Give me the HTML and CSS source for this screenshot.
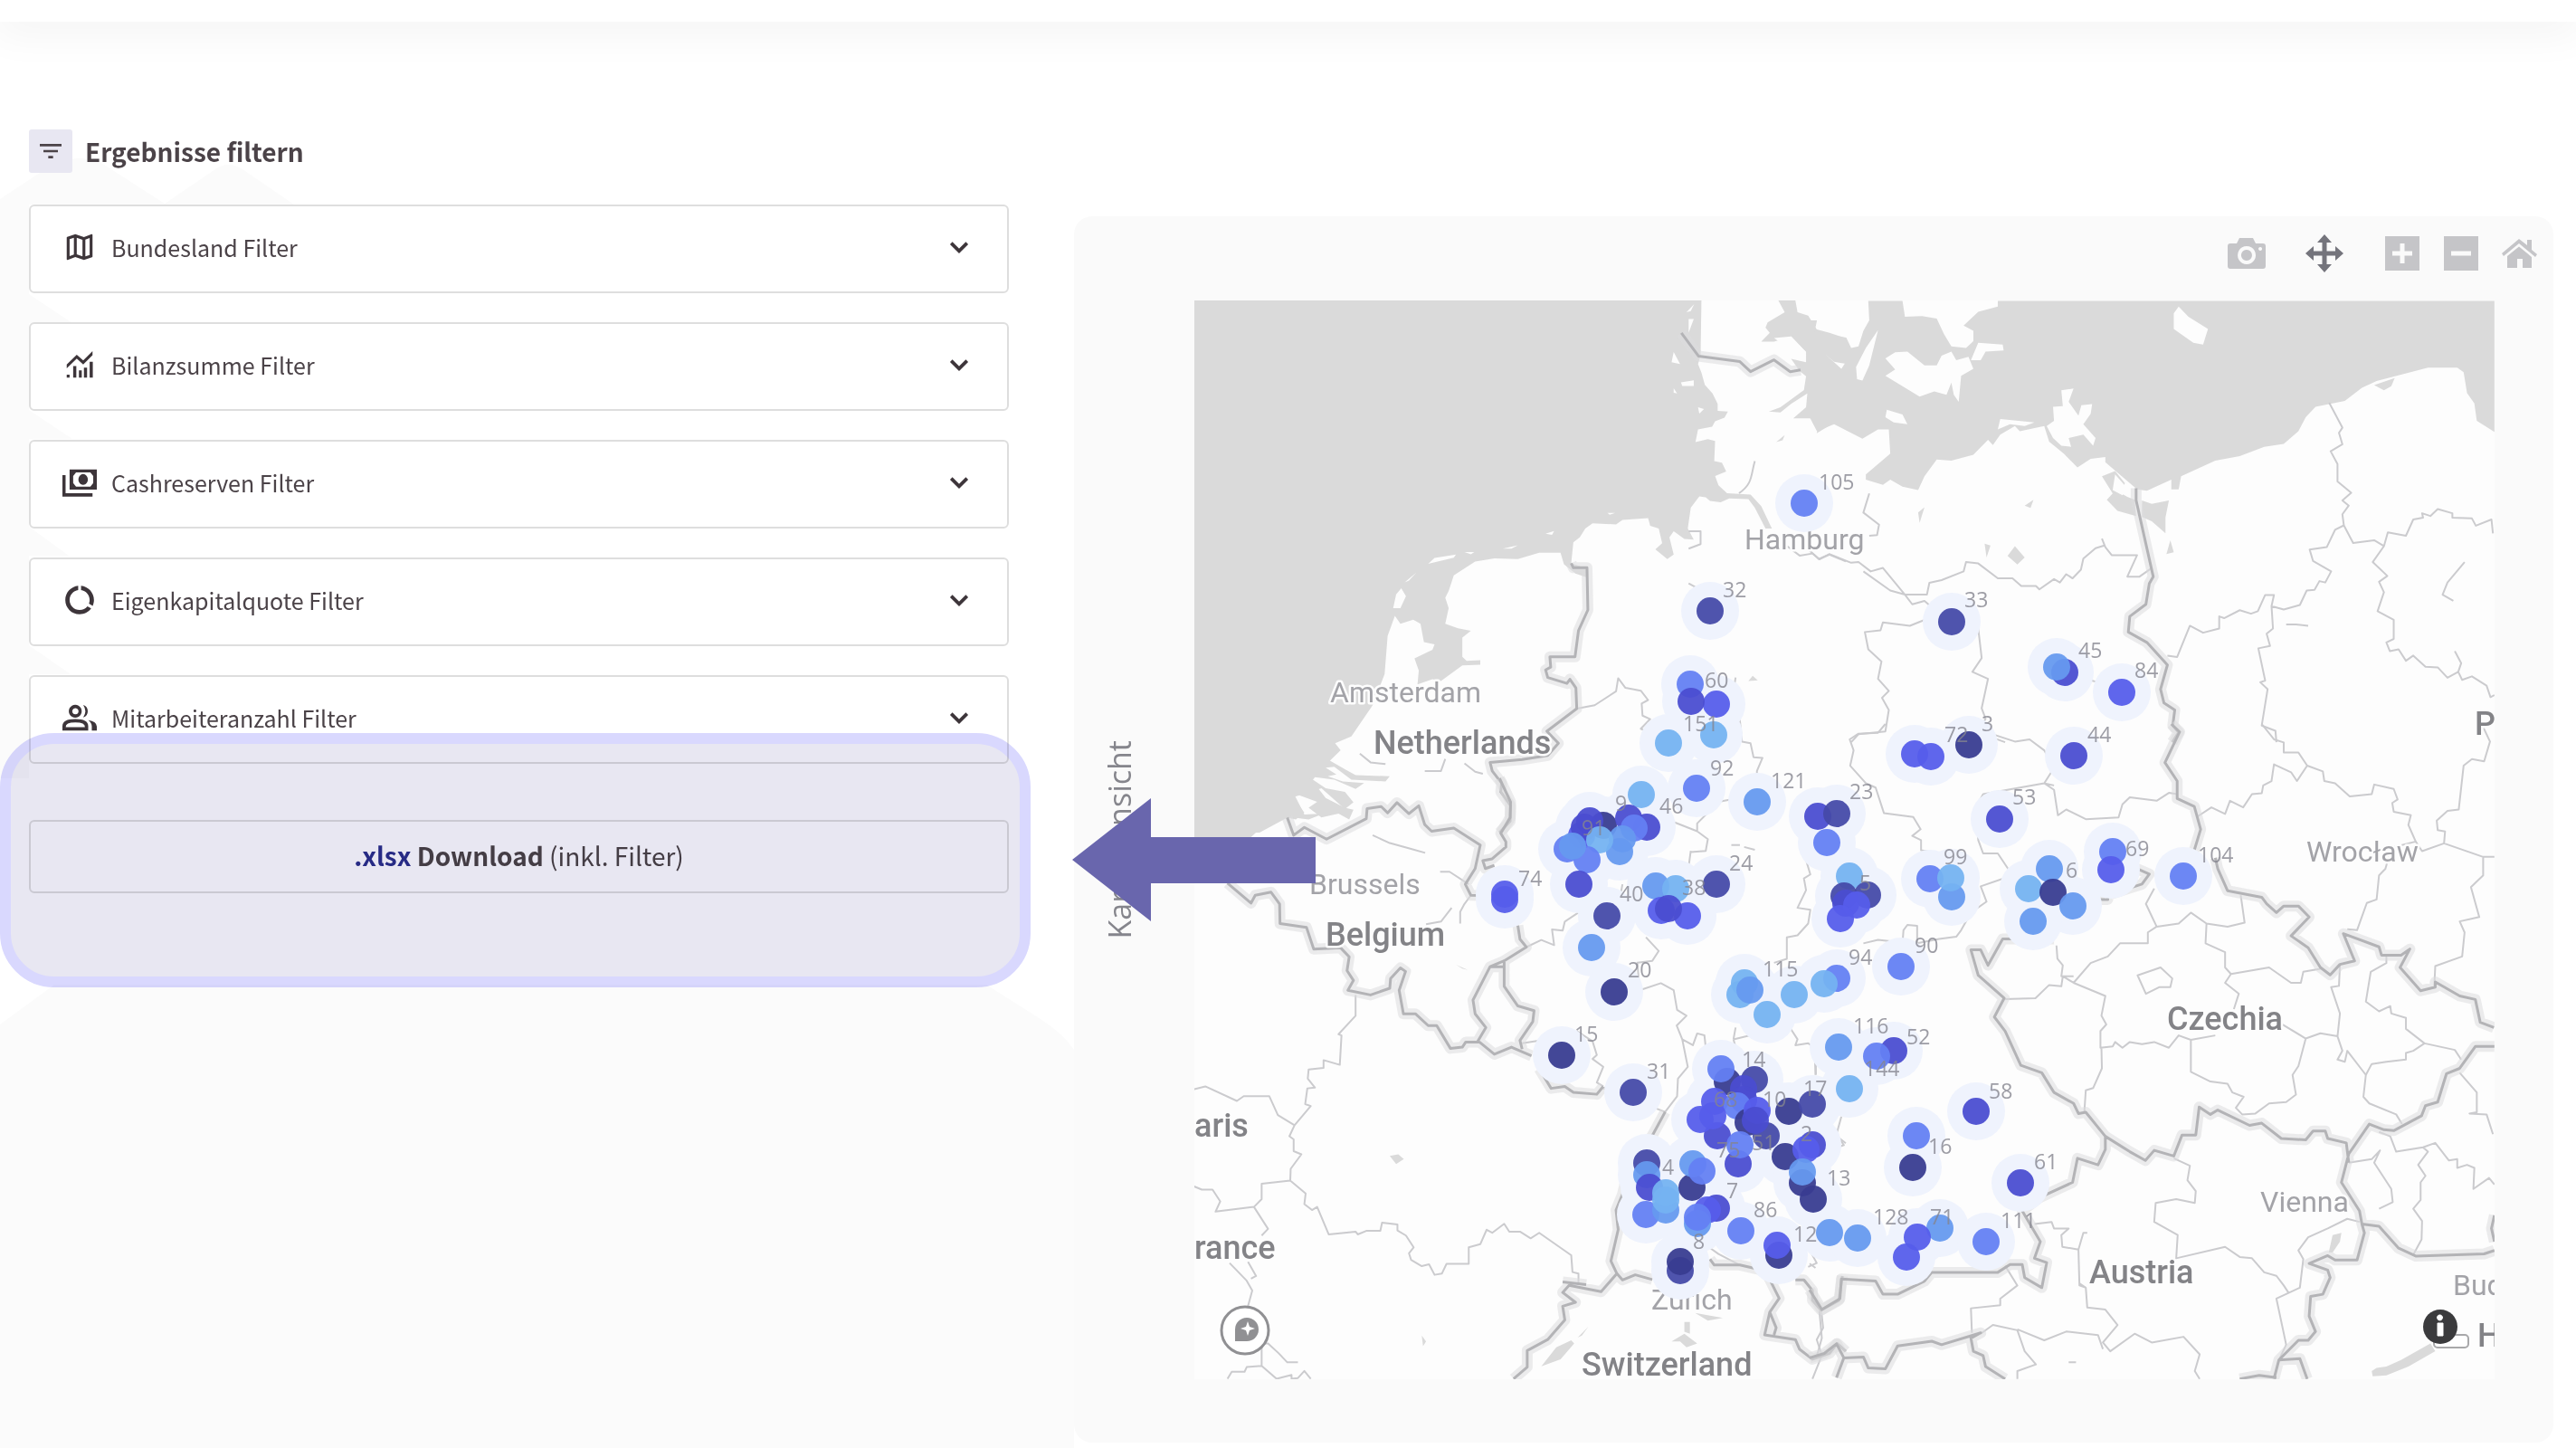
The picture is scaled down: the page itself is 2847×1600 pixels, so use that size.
FILE: index.html
```
<!DOCTYPE html>
<html lang="de">
<head>
<meta charset="utf-8">
<title>Ergebnisse filtern</title>
<link rel="stylesheet" href="styles.css">
</head>
<body>
<svg class="backdrop" width="1187" height="1600" viewBox="0 0 1187 1600" aria-hidden="true">
  <path d="M0 220 50 187Q80 167 112 180L182 225 238 187Q252 177 268 187L325 226H32V325L80 357H32V453L80 485H32V582L76 614H32V713L78 745H32V860H0ZM0 1132 60 1088H1090L1150 1126Q1175 1142 1187 1160V1600H0Z"/>
</svg>
<header class="topbar"></header>
<main class="layout">
  <section class="filters">
    <h1 class="heading">
      <span class="heading-icon"><svg width="32" height="32" viewBox="0 0 24 24"><path d="M10 18h4v-2h-4v2zM3 6v2h18V6H3zm3 7h12v-2H6v2z"/></svg></span>
      Ergebnisse filtern
    </h1>
    <div class="filter-list">
      <button class="filter" type="button">
        <svg class="icon" viewBox="0 0 24 24"><path d="M20.5 3l-.16.03L15 5.1 9 3 3.36 4.9c-.21.07-.36.25-.36.48V20.5c0 .28.22.5.5.5l.16-.03L9 18.900l6 2.1 5.640-1.9c.21-.07.36-.25.36-.48V3.5c0-.28-.22-.5-.5-.5zM10 5.470l4 1.4v11.660l-4-1.4V5.470zm-5 .99l3-1.010v11.700l-3 1.160V6.460zm14 11.080l-3 1.010V6.860l3-1.160v11.840z"/></svg>
        <span class="label">Bundesland Filter</span>
        <svg class="chevron" viewBox="0 0 24 24"><path d="M5 8.500 12 15.500 19 8.500"/></svg>
      </button>
      <button class="filter" type="button">
        <svg class="icon" viewBox="0 0 24 24"><path d="M3 19h2v2H3zM7.500 13h2.200v8H7.500zM11.500 16h2v5h-2zM15 14h2.200v7H15zM19 10h2.200v11H19zM3 14.500V11.800L10 5l4.500 4L21 2.500v2.800L14.500 11.800 10 7.700z"/></svg>
        <span class="label">Bilanzsumme Filter</span>
        <svg class="chevron" viewBox="0 0 24 24"><path d="M5 8.500 12 15.500 19 8.500"/></svg>
      </button>
      <button class="filter" type="button">
        <svg class="icon" viewBox="0 0 24 24"><path fill-rule="evenodd" d="M5 3h19v14H5zM7.500 7.500v5L9.500 15h10l2-2.500v-5L19.500 5h-10zM14.500 6.200a3.300 3.800 0 1 1-.1 0zM0 7h2.200v12.500H21V22H0z"/></svg>
        <span class="label">Cashreserven Filter</span>
        <svg class="chevron" viewBox="0 0 24 24"><path d="M5 8.500 12 15.500 19 8.500"/></svg>
      </button>
      <button class="filter" type="button">
        <svg class="icon" viewBox="0 0 24 24"><path d="M13 2.050v3.030c3.390.49 6 3.390 6 6.920 0 .9-.18 1.750-.48 2.540l2.600 1.530c.56-1.240.88-2.620.88-4.070 0-5.180-3.950-9.450-9-9.950zM12 19c-3.870 0-7-3.130-7-7 0-3.530 2.610-6.430 6-6.920V2.050c-5.060.5-9 4.760-9 9.950 0 5.520 4.470 10 9.990 10 3.310 0 6.240-1.610 8.060-4.090l-2.600-1.530C16.170 17.980 14.210 19 12 19z"/></svg>
        <span class="label">Eigenkapitalquote Filter</span>
        <svg class="chevron" viewBox="0 0 24 24"><path d="M5 8.500 12 15.500 19 8.500"/></svg>
      </button>
      <button class="filter" type="button">
        <svg class="icon" viewBox="0 0 24 24"><path fill-rule="evenodd" d="M9 3a4.500 4.500 0 1 1-.1 0zM9 5.300a2.200 2.200 0 1 0 .1 0zM0 21v-3q0-5 9-5t9 5v3zM2.300 18.700h13.400Q16 15.300 9 15.300T2.300 18.700zM14.500 3.200a4.500 4.500 0 0 1 0 8.600q3-4.300 0-8.600zM18 13.700q6 1 6 4.500V21h-3.500v-3q0-2.500-2.500-4.300z"/></svg>
        <span class="label">Mitarbeiteranzahl Filter</span>
        <svg class="chevron" viewBox="0 0 24 24"><path d="M5 8.500 12 15.500 19 8.500"/></svg>
      </button>
    </div>
    <button class="download" type="button"><b><span class="ext">.xlsx</span> Download</b> (inkl. Filter)</button>
    <div class="highlight"></div>
  </section>
  <section class="panel">
    <div class="toolbar">
      <button class="tool" type="button" aria-label="Bild speichern"><svg viewBox="0 0 42 42"><path fill-rule="evenodd" d="M3 10H10L13 4H28L31 10H39Q42 10 42 13V35Q42 38 39 38H3Q0 38 0 35V13Q0 10 3 10ZM21 13a10 10 0 1 0 .1 0zM21 17a6 6 0 1 1-.1 0zM36 14a2 2 0 1 0 .1 0z"/></svg></button>
      <button class="tool active" type="button" aria-label="Verschieben"><svg viewBox="0 0 42 42"><path d="M21 0 29 9H23.500V18.500H33V13L42 21 33 29V23.500H23.500V33H29L21 42 13 33H18.500V23.500H9V29L0 21 9 13V18.500H18.500V9H13Z"/></svg></button>
      <div class="tool-group">
        <button class="tool" type="button" aria-label="Vergrößern"><svg viewBox="0 0 42 42"><path fill-rule="evenodd" d="M2 2H40V40H2ZM18.500 10V18.500H10V23.500H18.500V32H23.500V23.500H32V18.500H23.500V10Z"/></svg></button>
        <button class="tool" type="button" aria-label="Verkleinern"><svg viewBox="0 0 42 42"><path fill-rule="evenodd" d="M2 2H40V40H2ZM10 18.500V23.500H32V18.500Z"/></svg></button>
        <button class="tool" type="button" aria-label="Zurücksetzen"><svg viewBox="0 0 42 42"><path d="M1 21 20 5 29 12V6H34V17L40 22 38 25 20 10 3 24ZM7 24 20 13.500 34 25V37H24V27H18V37H7Z"/></svg></button>
      </div>
    </div>
    <div class="map-row">
      <span class="side-label">Kartenansicht</span>
      <svg class="map" viewBox="1320 332 1437 1192">
        <rect class="land" x="1320" y="332" width="1437" height="1192"/>
        <!-- north-west -->
        <g transform="translate(1300 320) scale(.4719 .3827)">
          <path class="water" d="M42 31H1230L1228 190 1222 215 1230 240 1238 275 1256 300 1268 330V350L1292 352 1284 370 1262 380 1255 396 1222 404 1216 440 1245 432 1262 437 1260 495 1278 500 1288 525 1262 538 1270 565 1290 588 1345 592 1370 625 1395 690 1380 690 1355 630 1340 605 1295 603 1275 614 1250 610 1240 600 1225 597 1205 630 1198 690 1212 722 1190 720 1165 698 1155 715 1165 765 1150 778 1122 750 1138 732 1130 690 1110 682 1105 660 1045 665 1030 678 975 675 958 690 945 715 930 730 925 790 960 805V830L935 820 908 793 900 760 850 760 800 778 745 776 700 785 650 825 638 870 630 890 638 920 630 965 660 978 690 985 670 1005V1060L680 1072 712 1070V1083L670 1085 620 1130 600 1125 565 1140 568 1100 558 1065 600 1040 605 1024 580 1018 572 965 555 953 525 965 512 942 495 1000 488 1110 460 1200 410 1290 372 1310 385 1330 360 1360 395 1385 420 1402 500 1405 490 1420 410 1415 370 1378 350 1380 375 1400 355 1405 390 1420 440 1425 420 1442 370 1415 325 1408 320 1415 350 1440 395 1450 415 1480 395 1500 340 1440 275 1465 300 1510 280 1530 260 1525 195 1568H42ZM1410 31H1450L1455 65 1480 75 1500 115 1530 125 1568 140V400L1540 385 1500 415 1507 372 1445 372 1475 340 1478 300 1440 330 1415 355 1388 352 1415 340 1470 290 1475 250 1460 235 1440 200 1475 210 1475 180 1440 135 1400 150 1370 150 1390 125 1380 110 1385 95 1425 65ZM1340 1130 1350 1115 1362 1128ZM1405 440 1425 420 1420 435Z"/>
          <path class="land" d="M1195 65 1213 42 1205 62ZM1200 85H1212L1200 125ZM1165 180 1180 215 1160 210ZM1182 268 1212 262V278H1185ZM1165 285 1173 300 1165 298ZM1222 340 1236 345 1225 358ZM1520 185 1568 210 1552 225 1535 215ZM1475 180 1462 205 1435 195 1440 175 1400 140 1440 135ZM590 792 605 775 655 765 650 774ZM675 758 698 758 690 764ZM765 748 800 738 785 748ZM865 705 885 697 880 708ZM828 725 830 720ZM1010 645 1028 645 1015 650ZM535 845 562 817 545 840ZM508 920 515 880 527 862 538 885 525 920Z"/>
          <g class="region"><path d="M938 1210 980 1200 1030 1160 1035 1122 1052 1150 1088 1158 1105 1185 1090 1195 1092 1230 1110 1240 1088 1268 1110 1280 1155 1250M1310 1120 1305 1160 1290 1200 1318 1220 1325 1305 1345 1310 1352 1350 1373 1352 1360 1390 1360 1430 1400 1432M1200 848 1240 875 1270 870M1355 495C1345 540 1350 560 1318 588M1200 698H1228V735L1200 748M1430 740 1460 768 1490 762 1505 778 1530 765 1568 785M430 1340 455 1365 490 1370M630 1355 620 1390H582M675 1368 700 1392 718 1398"/></g>
          <g class="border"><path id="nw" d="M1183 125 1223 192 1320 208 1345 237 1400 203 1438 237 1462 232M925 790 930 803H962L964 925 942 985 934 1060H875L877 1090 865 1098 870 1120 915 1137 922 1125 936 1150 938 1210 868 1275 895 1310 870 1345 810 1357 735 1365 740 1390 762 1425 760 1450 783 1490 782 1535 757 1568"/></g>
          <use class="border-line" href="#nw"/>
        </g>
        <!-- north-east -->
        <g transform="translate(2000 220) scale(.5402 .3827)">
          <path class="water" d="M0 350 15 350 10 385 75 400 85 430 100 425 110 380 122 350 120 294H190L195 340 230 338 260 345 275 390 290 425 320 430 335 410V380L315 365 345 325 385 310V294H1401V672L1365 640 1360 590 1345 560 1338 500 1325 487H1265L1160 525 1130 545 1095 583 1035 600 1015 630 1000 670 970 707 930 715 880 742 830 755 760 800 755 838H740V810L690 842 670 838 605 760V745L575 750 548 775 520 735 490 700 480 655 430 670 420 655 390 680 375 710 365 695 335 738 290 755 260 752 235 800 222 840 190 830 165 810 150 825 115 810V795L165 735 162 665 140 665 108 692 50 650 15 670 0 630ZM598 800 625 785 645 820 638 850 650 860 665 868 668 915 630 900 608 868 620 850ZM680 870 700 880 735 870 728 920V965L700 930 680 918ZM1155 537 1197 517 1190 540 1175 552ZM222 905 235 890 225 935ZM440 885 458 868 452 892ZM358 995 370 1000 362 1035ZM405 1030 420 1002 440 1035 425 1055ZM730 1025 738 985 745 1020ZM1383 1200 1401 1225Z"/>
          <path class="land" d="M155 460 175 442 200 440 235 480 260 480 270 452 290 440 300 465 325 455 335 490 310 510 305 585 295 565 290 530 280 565 255 555 225 570 155 510 175 492ZM330 465 345 415 395 420 397 437 360 440 350 465ZM140 378 122 480 108 524 97 520 95 485 115 430ZM32 448 50 470 72 475 65 490ZM158 608 190 622 200 650 172 645 155 630ZM515 552 540 547 530 585 550 625 556 595 578 592 575 620 560 650 585 690 580 712 560 680 530 690 535 715 515 712 498 690 485 655 500 640 498 600 518 598ZM755 310 775 340 815 375 805 420 785 415 745 375V330ZM625 795 650 835 640 855 620 840ZM390 635 460 645 440 655 410 650 385 665Z"/>
          <g class="region"><path d="M1063 588 1090 660 1083 675 1090 708 1066 728 1080 765V815L1108 848 1090 870 1103 885 1090 910 1093 942 1112 993 1155 985 1175 1002 1152 1048 1182 1088 1165 1105 1175 1135 1162 1190 1195 1215V1270L1180 1280 1187 1305 1205 1300 1220 1333 1235 1318 1260 1350 1285 1352 1305 1382 1327 1365 1335 1388 1355 1378 1385 1405 1393 1438 1401 1432M1093 942 1075 955 1058 1005 1023 1012 1030 1045 1067 1075 1055 1107 1043 1103 1033 1128 1017 1130 1003 1172 970 1185 945 1175 950 1143H932L917 1190 903 1197 880 1187 848 1210 838 1205V1240L805 1252 778 1232 752 1322 732 1318M945 1175 948 1240 935 1255 942 1290 918 1297 932 1390 922 1395 937 1415 925 1520 953 1535 955 1568M1175 1002 1183 962 1220 972 1235 925 1255 920 1253 907 1270 915 1285 895 1315 907V920L1355 922 1363 943 1395 925 1398 965M598 980 605 1005 618 1028H670L650 1090H675L700 1065M603 1000 585 1008 560 1038 555 1070 538 1095 525 1083 512 1107 500 1097 470 1127 463 1117H433L415 1095H385L345 1052 320 1048 315 1075 270 1100 245 1108 240 1142H195L150 1065 125 1075 100 1048 85 1050 40 1025 20 1040 0 1015M110 1075 165 1130 195 1142 210 1170 235 1160 280 1215 345 1240 352 1325 333 1365 365 1385 352 1470 360 1500 345 1540 400 1568M235 1215 205 1232 150 1222 145 1245 113 1250 120 1300 147 1335 140 1385 162 1420 148 1440 162 1475 155 1537 100 1545 85 1568M122 850 110 905 142 940 138 970 122 972M1340 1048 1305 1107 1295 1142 1317 1160M1320 1305 1333 1340 1327 1365M975 1228H995L1020 1232M570 1350 577 1390 590 1395"/></g>
          <g class="border"><path id="ne" d="M668 835V870L703 1090 695 1110 688 1170 655 1205 652 1250 690 1280 732 1345 718 1415 725 1455 747 1475 743 1520 755 1540 742 1568"/></g>
          <use class="border-line" href="#ne"/>
        </g>
        <!-- south-west -->
        <g transform="translate(1300 860) scale(.4719 .4337)">
          <path class="water" d="M42 0H310L325 15 350 50 395 75 415 80 405 105 380 90 340 100 310 75 330 60 275 38 300 92 345 90 310 105 260 98 240 105 215 110 175 150 42 210ZM500 962 520 958 533 970 515 983ZM855 1498 890 1450 925 1432 932 1440 900 1480ZM940 1425 965 1397 950 1420ZM1190 1385H1203V1415L1190 1410ZM1160 1435 1190 1415 1220 1440 1195 1450 1180 1435ZM1215 1362 1280 1375 1245 1382ZM655 475 683 488 670 485ZM575 1420 585 1435 578 1447Z"/>
          <g class="region"><path d="M42 792 68 785 142 822 158 810 218 810 238 858 277 884 265 912 275 920V950L293 958 268 995 267 1025 200 1033V1072L182 1092 92 1104 103 1078 85 1048H60L42 1040M277 884 315 835 302 830 307 790 325 788 308 765 310 742 345 738V718L383 730 387 655 380 652 420 605V552M267 1025 303 1058 300 1085 318 1100 330 1092 357 1162 420 1155 425 1162 445 1153H478L482 1132 518 1137V1152L538 1165 556 1195 545 1210 550 1227 575 1243 592 1238 605 1265 622 1262 633 1237H685V1195L712 1187 727 1150 740 1158 768 1135 780 1155H805L830 1172 850 1158 925 1215 928 1258 942 1262V1290M182 1092 215 1148 200 1165M125 1235 165 1280 178 1305 168 1345M168 1232 187 1268 175 1275M200 1440 215 1440 240 1465 260 1488H285M200 1440V1497L165 1500 160 1512H130L120 1530M200 1497 235 1530 270 1520V1530L285 1528 300 1510 315 1530M820 430 855 412 885 425 880 385 905 388 910 365 945 340 1040 300 1045 270M1100 405 1130 440 1115 465 1080 470 1085 540 1135 522 1165 540 1173 590 1195 605 1172 630 1185 665 1210 680 1220 650 1237 655 1240 685H1310L1305 665M1185 665 1198 735 1175 765 1173 810 1145 850 1000 790 1010 785M810 675 900 660 940 645 975 670 985 705 975 715 1000 735 985 775 1000 785M1305 665 1420 635 1440 640 1455 665 1450 680 1480 675 1498 690V755M1310 635 1305 665M1150 105 1220 135 1220 115 1270 60 1295 55 1305 80 1390 90M1205 185 1200 225 1190 250M1220 135 1245 155 1240 185 1205 188M1300 170H1320M1330 175 1355 182M1568 190 1470 190 1485 245 1470 255 1475 285 1455 330 1485 335 1480 370 1455 400 1430 405V460L1400 470M1248 1195 1270 1212 1320 1240M1500 1170 1480 1195 1500 1235 1480 1245M460 145 500 165 550 180 583 190M618 238H640L685 270M690 298 675 320 665 340 665 370M645 330 620 365 585 372M1510 1350 1515 1400 1500 1430 1512 1470 1490 1530M1520 850 1545 910 1568 930"/></g>
          <g class="border"><path id="sw" d="M757 0 783 60 782 100 760 140 772 162V175L740 205 718 210 724 230 745 222M260 100 275 145 300 125 352 155 445 103 447 77 480 72 495 88 517 62 545 90 568 70 582 118 598 135 650 127 712 170 700 230 677 270 690 298 770 300M800 375 805 410 820 430 768 465 735 480 695 565 700 600 725 635 705 672M735 480H768M768 465V530L800 580 838 592 835 620 805 668 810 690M120 267 175 318 185 298 222 290 242 320 243 370 305 380 322 435 385 432 405 455 400 490 415 515 402 540 455 552 500 535 502 510 525 483 537 492 522 540 532 600H560L590 630H610L642 688 670 685 678 672H710L745 703 785 685 832 707M850 740 878 790 910 785 930 800 985 805 1000 785M1145 850 1115 910 1060 990 1045 1060 1030 1100 1035 1150 1018 1230 1032 1262 1045 1278 1075 1265 1115 1277M1250 1225 1260 1240 1320 1240 1380 1255 1412 1325 1390 1360 1378 1418 1450 1430 1460 1455 1490 1480 1530 1465 1548 1440 1568 1460M1032 1262 995 1308 920 1292 905 1310 935 1335 905 1345 910 1380 870 1430 822 1458V1500L790 1530M1390 1360 1405 1400 1400 1418M1450 1278H1470L1490 1305V1330L1510 1355 1552 1330 1560 1268M960 1290 905 1283"/></g>
          <use class="border-line" href="#sw"/>
        </g>
        <!-- south-east -->
        <g transform="translate(2000 800) scale(.5402 .4847)">
          <path class="water" d="M1150 1475 1160 1468 1180 1465 1210 1450 1270 1412 1280 1430 1225 1465 1180 1485 1152 1487ZM1062 1205 1070 1165 1088 1160 1085 1180 1070 1205Z"/>
          <g class="region"><path d="M155 0 140 20 100 22 82 35 90 60 83 95 115 135 135 145 152 203 212 212 227 240 210 255 228 265V288L270 295M310 0 420 40 450 35 480 60 500 100 480 135 355 160 340 190 345 265 355 295H385L415 345 350 370 362 405 330 430 310 470 300 485 265 490 220 500V460L200 458 192 470 190 500 165 495 140 492 110 500M500 140 480 135M480 135 500 150 508 208 525 195 565 217 632 213 640 183 655 167 710 175 735 157 752 160M795 210 822 190 850 205 860 175 887 190 905 160 925 158 928 140 945 130 950 92 985 110 997 130 1018 95 1000 65H970V42L950 35 925 0M1018 95 1050 108 1053 130 1075 135 1105 165 1150 160 1155 138 1195 148 1203 172 1192 180 1195 200 1230 208 1225 230 1240 268 1253 290 1298 272 1378 303H1401M1240 268 1190 282 1178 330 1165 345 1160 400 1140 408 1120 470 1100 468M1298 272 1300 245 1285 242 1283 220 1305 198 1328 195 1338 95 1355 80 1380 85 1392 40 1375 0M1378 303V345L1353 372 1370 440 1330 450 1340 475 1335 530 1280 552 1278 600M705 375 688 410 710 462 692 475V500H635L610 530 575 545 540 590 518 575 515 598 490 595 462 625 400 627M505 505 507 535 518 550 515 575H540M710 462 755 455 780 430 812 455 855 462 890 453 882 390M812 455 810 500 850 520V555L862 570 850 590 878 615 868 650M862 570 940 555 985 590 1005 590 1010 565 1045 558M540 590 605 620 597 665 607 685 595 700V738L620 735 625 725 640 738 655 725 680 730 705 725 735 738 755 710 780 720V793L820 815 855 820 865 840 888 850 872 875 885 890 912 888 940 865 975 862 995 845 988 800 1000 780 1015 717 960 680M597 738 598 785 580 830 565 835 562 885M780 720 830 710M1015 717 1045 705 1080 712 1085 660 1067 600 1083 597 1085 548M1080 712 1090 745 1080 765 1095 770 1100 745 1138 800 1133 850 1145 865 1200 890 1212 912M1138 800 1150 775 1180 770 1220 765V750L1235 745 1258 728 1220 695V670L1190 660 1188 643 1165 655 1138 633 1148 565 1180 545V530M1258 728 1320 743 1333 765M1330 795 1365 840V885L1350 888 1385 890 1398 935M671 573 718 555 742 580 738 600H715L688 615ZM745 990 778 1007 773 1040 790 1065 788 1092 750 1083 708 1092 705 1135 753 1165 750 1218 850 1192 880 1215 905 1218 930 1250 955 1258 970 1280 980 1297 955 1310 975 1415 960 1450M980 1297 1003 1285 1010 1220 1000 1200 1020 1170 1060 1150 1100 1128 1125 1135M1103 1000 1150 992 1167 972 1155 1000 1190 1060 1193 1090 1165 1105M1165 930 1188 940 1200 975 1255 965 1265 975 1245 1005 1260 1030 1250 1045V1085L1235 1105 1253 1133 1252 1175 1235 1210M1255 965 1280 955 1308 995 1325 992V1012L1345 1005 1360 1012 1358 1060 1390 1035 1401 1050M400 1235 425 1280 390 1310V1325L330 1332 332 1388M460 1140 495 1135 500 1150 530 1150 515 1165 517 1192 550 1198 560 1160H568M550 1198 552 1280 565 1285 568 1330 605 1335 630 1370 600 1410 615 1430 665 1390 700 1410 765 1397 798 1437 788 1475 798 1493M565 1285 552 1275M350 1390 375 1370 425 1382 440 1430 463 1460 425 1475V1493M425 1380 480 1405 525 1385 590 1393 600 1425M0 730 10 735 12 800M65 895 55 935 70 960 45 970M0 1230 12 1240M20 1338 25 1400 15 1440M530 1455H545"/></g>
          <g class="border"><path id="se" d="M740 0 757 18 727 88 752 130V170L787 188 800 240 785 295M830 305 835 330 855 380 925 395 935 410 955 430 970 415 1000 415 1022 440 985 483 1020 510 1045 555 1065 572 1085 548 1115 540 1092 478 1165 508 1170 527H1210L1228 513 1208 555 1250 608 1280 600V588L1330 620 1362 628 1372 680 1400 692M670 330 695 342 680 365 610 390 610 400H560M500 490H395L365 550 350 515H330L345 573 398 625 378 668 400 700 432 778 475 795 500 840 540 865 550 888 565 885 605 940 655 975 687 995 705 972 745 985 762 937H790L797 873 820 890 835 880 900 915 925 910 965 945 1015 948 1030 928H1055L1060 945 1098 955 1103 1000M1401 735H1362L1330 785 1303 797 1285 862 1260 870 1252 893 1195 927 1175 925 1145 912 1103 980 1088 1045 1125 1110 1130 1140 1165 1145 1205 1195 1240 1213 1380 1208 1401 1200M1130 1140 1135 1160 1120 1222 1075 1222 1060 1212 1022 1230 1060 1245 1065 1262 1050 1300 1025 1305 1022 1350 1035 1385 1020 1405H1000L960 1450 950 1493M960 1450 1003 1447 1018 1493M605 940V970L590 1005 548 990 538 1045 470 1080 435 1110 472 1180 460 1218 485 1228 475 1285 440 1262 435 1232H410L385 1250H250L235 1270 180 1300 150 1300 135 1270 65 1265 62 1310 25 1335 0 1290M0 1445 30 1435 55 1413 70 1445 110 1443 120 1468 155 1470 180 1418 250 1407 270 1415 350 1388 330 1400 335 1430 355 1440 360 1465 400 1493M70 1445 55 1490M1401 1120 1395 1150 1401 1180M880 1493 920 1485 955 1490"/></g>
          <use class="border-line" href="#se"/>
        </g>
        <g class="city">
          <text x="1928" y="607">Hamburg</text><text x="1470" y="776">Amsterdam</text><text x="1447" y="988">Brussels</text>
          <text x="1825" y="1447">Zürich</text><text x="2549" y="952">Wrocław</text><text x="2498" y="1339">Vienna</text><text x="2711" y="1431">Bud</text>
        </g>
        <g class="country">
          <text x="1518" y="833">Netherlands</text><text x="1465" y="1045">Belgium</text><text x="1320" y="1256">aris</text><text x="1320" y="1391">rance</text>
          <text x="1748" y="1520">Switzerland</text><text x="2395" y="1138">Czechia</text><text x="2309" y="1418">Austria</text><text x="2735" y="812">P</text><text x="2738" y="1488">H</text>
        </g>
        <g id="halos" class="halos"></g>
        <g id="dots"></g>
        <g id="counts" class="counts"></g>
        <g>
          <circle cx="1376" cy="1470" r="26" fill="#fff" stroke="#909093" stroke-width="3"/>
          <path d="M1365 1482V1469A13 13 0 1 1 1378 1482Z" fill="#909093"/>
          <path d="M1379 1460 1381 1466 1387 1468 1381 1470 1379 1476 1377 1470 1371 1468 1377 1466Z" fill="#fff"/>
          <rect x="2690" y="1475" width="38" height="14" rx="4" fill="#fff" stroke="#a8a8aa" stroke-width="2"/>
          <circle cx="2697" cy="1466" r="19" fill="#3b3b3d"/>
          <path d="M2694 1462H2700V1476H2694ZM2697 1453A3 3 0 1 1 2696 1453Z" fill="#fff" stroke="#fff"/>
        </g>
      </svg>
    </div>
    <svg class="arrow" width="269" height="136" viewBox="0 0 269 136" aria-hidden="true"><path d="M0 68 87 0V43H269V94H87V136Z"/></svg>
  </section>
</main>
<script src="map.js"></script>
</body>
</html>
```

FILE: map.js
```
const NS = "http://www.w3.org/2000/svg";
const shades = { a: "#75b2f1", b: "#6699ef", c: "#6480f3", d: "#565ceb", e: "#4a4dd0", f: "#4549a8", g: "#383b90" };
const dots = `1994 556 c,1890 675 f,1868 756 c,1897 778 d,1869 775 e,1844 821 a,1894 812 a,1875 871 c,1942 886 b,1814 878 a,
1772 912 g,1748 923 d,1751 914 e,1757 907 e,1800 904 e,1820 914 e,1806 915 c,1793 927 b,1790 941 b,1768 928 a,1754 950 c,1732 938 c,1738 935 b,
1745 977 e,1663 994 d,1663 988 d,1776 1012 f,1759 1047 b,1784 1096 g,1830 979 b,1852 982 a,1836 1006 d,1865 1012 d,1844 1004 e,1897 977 f,
1928 1086 a,1923 1099 a,1934 1094 b,1953 1121 a,1983 1099 a,1726 1166 g,1805 1207 f,
1909 1195 g,1902 1181 c,1939 1193 f,1927 1203 e,1927 1215 e,1895 1217 d,1920 1222 c,1898 1255 e,1879 1237 d,1893 1233 d,1932 1240 g,1942 1227 d,1952 1255 f,1940 1238 e,
1977 1228 g,2003 1220 f,1921 1286 e,1923 1265 c,1973 1278 g,2003 1265 e,1996 1270 d,1992 1307 g,1992 1295 b,2004 1325 g,
1820 1285 f,1820 1298 b,1823 1312 e,1819 1342 c,1841 1337 b,1841 1326 a,1841 1318 a,1870 1312 g,1871 1286 b,1881 1294 c,
1897 1335 e,1887 1337 d,1876 1352 b,1876 1345 c,1924 1360 c,1966 1387 g,1964 1376 d,1857 1404 f,1857 1394 g,
2022 1362 b,2053 1368 b,2144 1357 b,2119 1367 d,2107 1389 d,2195 1372 c,2233 1307 e,2118 1255 c,2114 1290 g,2184 1228 e,
2032 1157 b,2093 1161 e,2074 1167 c,2044 1203 a,2116 833 d,2134 836 d,2176 823 g,2292 835 e,2210 905 e,2009 902 e,2030 899 f,2019 931 c,
2044 968 a,2064 989 f,2038 990 f,2040 998 e,2052 1000 d,2034 1015 d,2133 971 c,2157 991 b,2156 970 a,
2265 960 b,2242 982 a,2269 986 g,2291 1001 b,2247 1018 b,2335 941 c,2333 961 d,2413 968 c,2101 1068 c,2030 1081 c,2016 1087 a,
2157 687 f,2282 743 e,2273 737 b,2345 765 d`;
const counts = `2011 532 105,1905 651 32,2172 662 33,2298 718 45,2360 740 84,1885 751 60,1861 799 151,1891 848 92,1958 862 121,
1786 887 9,1835 890 46,1749 914 91,1679 970 74,1791 987 40,1860 980 38,1912 953 24,1800 1071 20,1741 1142 15,1821 1183 31,1949 1070 115,
1926 1170 14,1895 1214 68,1949 1214 10,1994 1202 17,1898 1270 75,1937 1262 51,1991 1252 2,1838 1289 4,1909 1315 7,1939 1336 86,1872 1371 8,
1983 1363 12,2020 1301 13,2071 1344 128,2134 1344 71,2212 1348 111,2249 1283 61,2132 1266 16,2199 1205 58,2061 1180 144,2108 1145 52,
2049 1133 116,2044 1057 94,2117 1044 90,2149 946 99,2284 961 6,2350 937 69,2430 944 104,2225 880 53,2045 874 23,2150 811 72,2191 799 3,
2308 811 44,2056 975 5`;

function add(parent, tag, attrs, text) {
  const node = document.createElementNS(NS, tag);
  for (const key in attrs) node.setAttribute(key, attrs[key]);
  if (text) node.textContent = text;
  document.getElementById(parent).appendChild(node);
}

for (const row of dots.split(",")) {
  const [cx, cy, shade] = row.trim().split(" ");
  add("halos", "circle", { cx, cy, r: 32 });
  add("dots", "circle", { cx, cy, r: 15, fill: shades[shade], "fill-opacity": 0.94 });
}
for (const row of counts.split(",")) {
  const [x, y, label] = row.trim().split(" ");
  add("counts", "text", { x: Number(x) - 1, y: Number(y) + 9 }, label);
}
```

FILE: styles.css
```
* { box-sizing: border-box; }

body {
  margin: 0;
  background: #fff;
  color: #4b4348;
  font-family: "Noto Sans CJK SC", "Noto Sans", sans-serif;
  font-size: 25px;
  line-height: 40px;
}

button {
  margin: 0;
  padding: 0;
  border: 0;
  background: none;
  color: inherit;
  font: inherit;
}

svg { display: block; }

.backdrop {
  position: absolute;
  top: 0;
  left: 0;
  z-index: -1;
  fill: #fbfbfb;
}

.topbar {
  height: 24px;
  box-shadow: 0 4px 48px 6px rgba(0, 0, 0, .06);
}

.layout {
  display: grid;
  grid-template-columns: 1083fr 1635fr;
  gap: 72px;
  padding: 119px 25px 0 32px;
  align-items: start;
}

.filters { position: relative; }

.heading {
  display: flex;
  align-items: center;
  gap: 14px;
  margin: 0 0 35px;
  font-size: 28px;
  font-weight: 700;
  line-height: 48px;
}

.heading-icon {
  display: grid;
  place-items: center;
  width: 48px;
  height: 48px;
  border-radius: 3px;
  background: #e8e7f2;
  fill: #4b4348;
}

.filter-list {
  display: grid;
  gap: 32px;
}

.filter {
  display: flex;
  align-items: center;
  height: 98px;
  padding: 0 38px 4px 35px;
  border: 2px solid #dedede;
  border-radius: 6px;
  text-align: left;
}

.icon {
  width: 38px;
  height: 38px;
  margin-right: 16px;
  fill: #3d353a;
}

.label { flex: 1; }

.chevron {
  width: 30px;
  height: 30px;
  fill: none;
  stroke: #3d353a;
  stroke-width: 3;
}

.download {
  width: 100%;
  height: 81px;
  margin-top: 62px;
  padding-bottom: 4px;
  border: 2px solid #dedede;
  border-radius: 6px;
  font-size: 28px;
}

.ext { color: #2b2f8c; }

.highlight {
  position: absolute;
  top: 667px;
  left: -32px;
  right: -24px;
  height: 281px;
  border: 12px solid #d9d8fe;
  border-radius: 60px;
  background: #e8e7f2;
  mix-blend-mode: multiply;
  pointer-events: none;
}

.panel {
  position: relative;
  margin-top: 96px;
  padding-bottom: 70px;
  border-radius: 20px;
  background: #fafafa;
}

.toolbar {
  display: flex;
  justify-content: flex-end;
  align-items: center;
  gap: 44px;
  height: 82px;
  margin-bottom: 11px;
  padding-right: 16px;
}

.tool-group {
  display: flex;
  gap: 23px;
}

.tool {
  width: 42px;
  height: 42px;
  fill: #c5c5c8;
}

.tool.active { fill: #74747c; }

.map-row {
  display: grid;
  grid-template-columns: 133fr 1437fr 65fr;
  align-items: center;
}

.side-label {
  justify-self: start;
  margin-left: 28px;
  color: #85858c;
  font: 34px/44px "Open Sans", sans-serif;
  writing-mode: vertical-rl;
  transform: rotate(180deg);
}

.map {
  width: 100%;
  overflow: hidden;
}

.land { fill: #fdfdfd; }
.water { fill: #dadada; }

.region path,
.border path {
  vector-effect: non-scaling-stroke;
}

.region,
.border,
.border-line {
  fill: none;
  stroke-linejoin: round;
}

.region {
  stroke: #cbcbce;
  stroke-width: 2;
}

.border {
  stroke: #dcdcde;
  stroke-opacity: .55;
  stroke-width: 12;
}

.border-line {
  stroke: #b3b3b6;
  stroke-width: 3;
}

.halos { fill: #eff3fd; }

.counts {
  fill: #85858f;
  fill-opacity: .8;
  font: 500 23px "Open Sans", sans-serif;
}

.city,
.country {
  font-family: Roboto, sans-serif;
  paint-order: stroke;
  stroke: #fdfdfd;
  stroke-width: 5px;
  stroke-linejoin: round;
}

.city {
  fill: #a3a3a8;
  font-size: 32px;
}

.country {
  fill: #838387;
  font-size: 36px;
  font-weight: 500;
}

.arrow {
  position: absolute;
  top: 643px;
  left: -2px;
  fill: #6966ad;
}
```
